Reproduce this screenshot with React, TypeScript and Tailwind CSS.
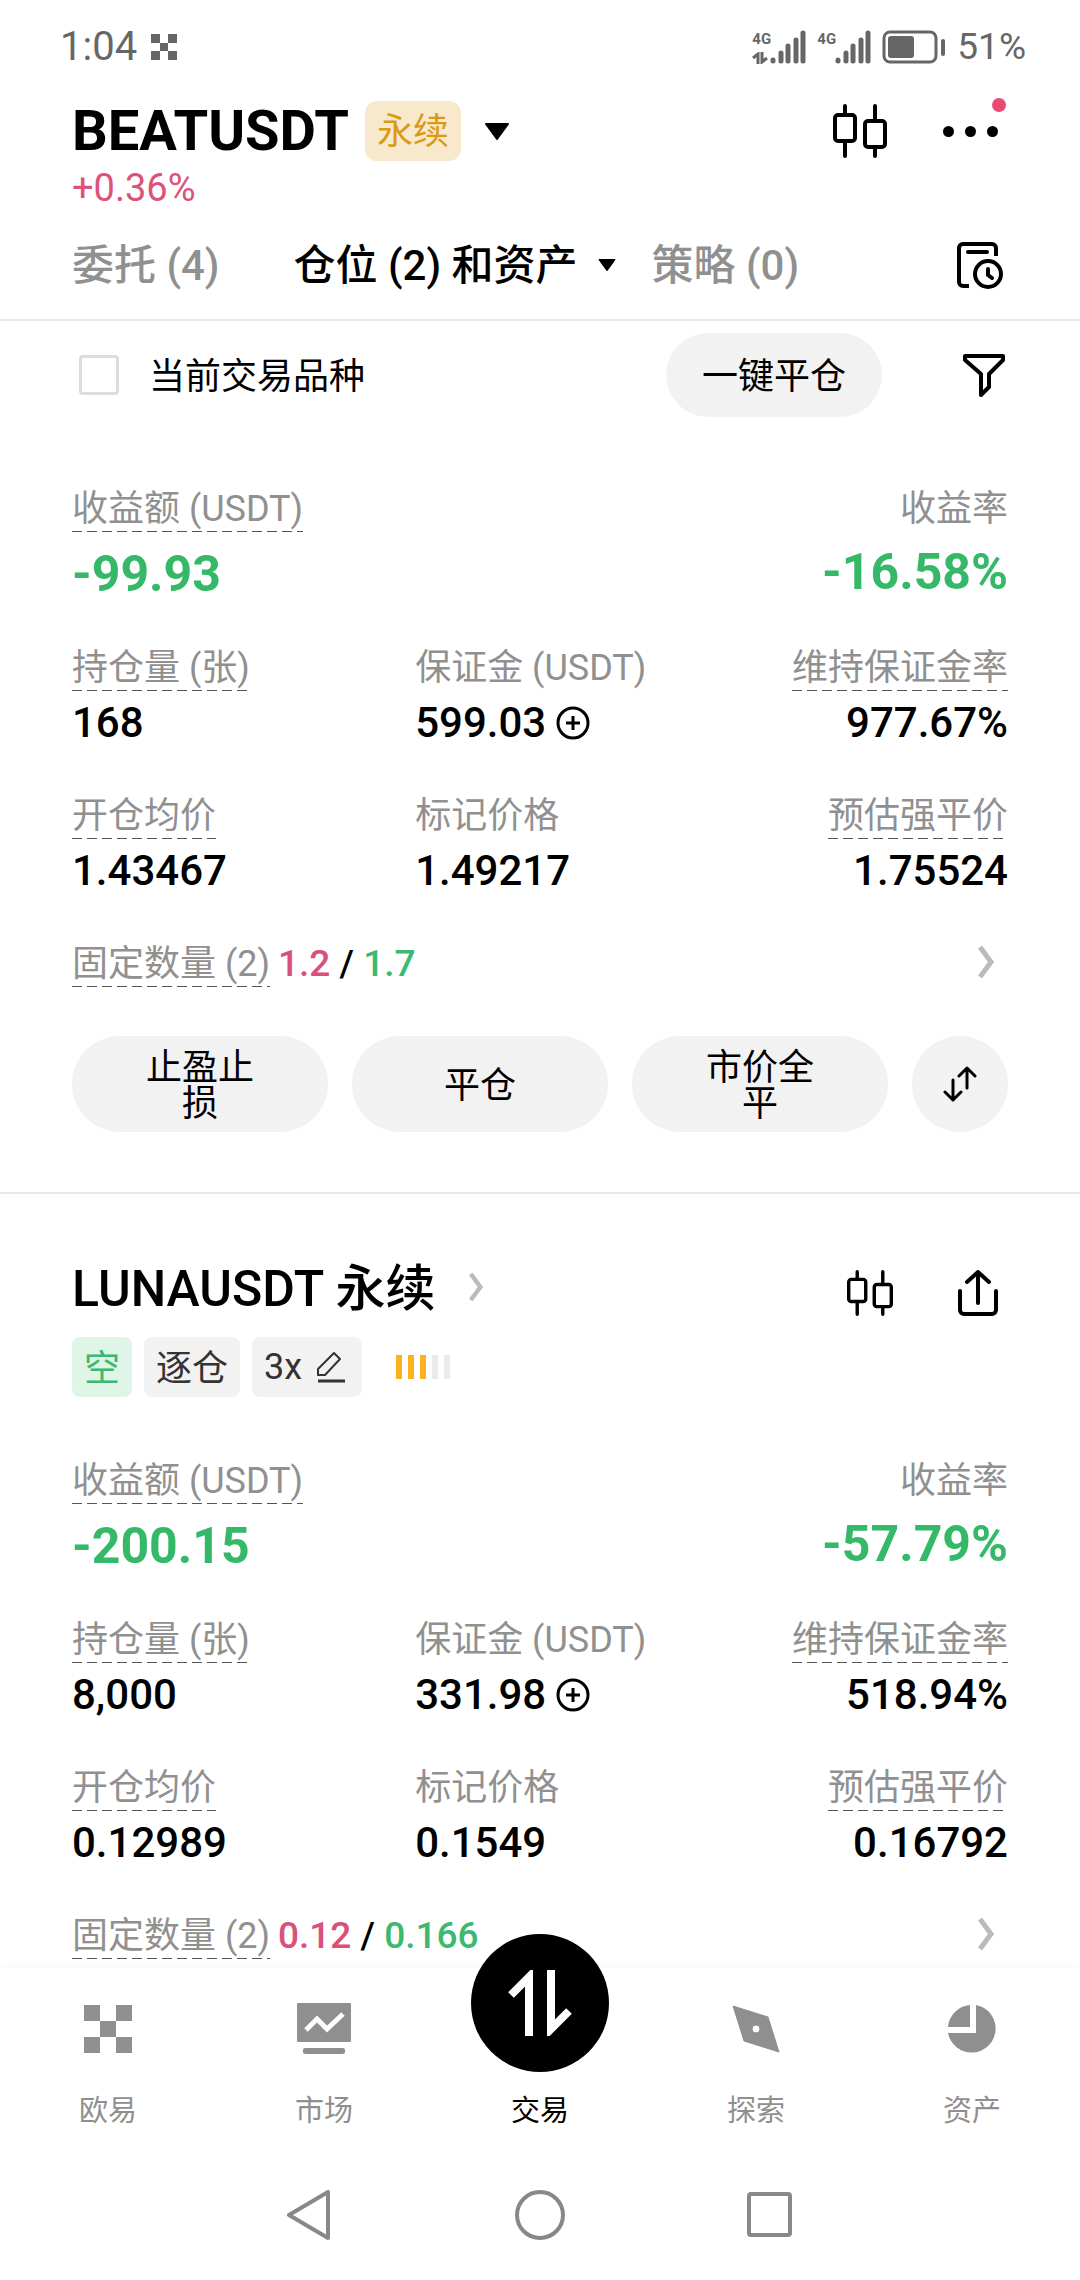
import { useState } from "react";
import type { ReactNode } from "react";
import clsx from "clsx";

type Position = {
  pnl: string;
  pnlRate: string;
  size: string;
  margin: string;
  marginRate: string;
  entryPrice: string;
  markPrice: string;
  liqPrice: string;
  takeProfit: string;
  stopLoss: string;
};

const beat: Position = {
  pnl: "-99.93",
  pnlRate: "-16.58%",
  size: "168",
  margin: "599.03",
  marginRate: "977.67%",
  entryPrice: "1.43467",
  markPrice: "1.49217",
  liqPrice: "1.75524",
  takeProfit: "1.2",
  stopLoss: "1.7",
};

const luna: Position = {
  pnl: "-200.15",
  pnlRate: "-57.79%",
  size: "8,000",
  margin: "331.98",
  marginRate: "518.94%",
  entryPrice: "0.12989",
  markPrice: "0.1549",
  liqPrice: "0.16792",
  takeProfit: "0.12",
  stopLoss: "0.166",
};

/* Icons */
const LogoIcon = ({ className }: { className: string }) => (
  <svg viewBox="0 0 48 48" className={className} fill="currentColor" shapeRendering="crispEdges" aria-hidden="true">
    <path d="M0 0h16v16H0zM32 0h16v16H32zM16 16h16v16H16zM0 32h16v16H0zM32 32h16v16H32z" />
  </svg>
);

const CandleIcon = ({ className }: { className: string }) => (
  <svg viewBox="0 0 54 54" className={className} fill="none" stroke="currentColor" strokeWidth="4" strokeLinecap="round" aria-hidden="true">
    <rect x="2" y="11" width="20" height="26" rx="3" />
    <rect x="32" y="17" width="20" height="26" rx="3" />
    <path d="M12 2v9M12 37v15M42 2v15M42 43v9" />
  </svg>
);

const CaretIcon = ({ className }: { className: string }) => (
  <svg viewBox="0 0 24 17" className={className} fill="currentColor" stroke="currentColor" strokeWidth="2" strokeLinejoin="round" aria-hidden="true">
    <path d="M1 1h22L12 16z" />
  </svg>
);

const HistoryIcon = () => (
  <svg viewBox="0 0 48 48" className="size-12" fill="none" stroke="currentColor" strokeWidth="4" aria-hidden="true">
    <path d="M40 15V7a4 4 0 0 0-4-4H7a4 4 0 0 0-4 4v34a4 4 0 0 0 4 4h6" />
    <path d="M12 11h19" strokeLinecap="round" />
    <circle cx="32" cy="33" r="13" />
    <path d="M32 28v6l4 3" strokeLinecap="round" />
  </svg>
);

const FilterIcon = () => (
  <svg viewBox="0 0 44 44" className="size-11" fill="none" stroke="currentColor" strokeWidth="4" strokeLinejoin="round" aria-hidden="true">
    <path d="M3 3h38v4L27 21v13l-8 8V21L3 7z" />
  </svg>
);

const ChevronIcon = ({ className }: { className: string }) => (
  <svg viewBox="0 0 16 32" className={className} fill="none" stroke="#bbbbbb" strokeWidth="5" aria-hidden="true">
    <path d="M2 1l11 15L2 31" />
  </svg>
);

const PlusCircleIcon = () => (
  <svg viewBox="0 0 34 34" className="size-[34px]" fill="none" stroke="currentColor" strokeWidth="3" aria-hidden="true">
    <circle cx="17" cy="17" r="15" />
    <path d="M17 10v14M10 17h14" />
  </svg>
);

const ShareIcon = () => (
  <svg viewBox="0 0 46 48" className="h-12 w-[46px]" fill="none" stroke="currentColor" strokeWidth="4" strokeLinecap="round" strokeLinejoin="round" aria-hidden="true">
    <path d="M5 22v19a4 4 0 0 0 4 4h28a4 4 0 0 0 4-4V22" />
    <path d="M23 34V3M12 13L23 3l11 10" />
  </svg>
);

const SwapIcon = () => (
  <svg viewBox="0 0 36 36" className="size-9" fill="none" stroke="currentColor" strokeWidth="3" strokeLinecap="round" strokeLinejoin="round" aria-hidden="true">
    <path d="M11 14v20M3 26l8 8 8-8M25 22V2M17 10l8-8 8 8" />
  </svg>
);

const PencilIcon = () => (
  <svg viewBox="0 0 30 32" className="h-8 w-[30px]" fill="none" stroke="currentColor" strokeWidth="2" strokeLinejoin="round" aria-hidden="true">
    <path d="M18 2l6 6L9 24H2v-6z" />
    <path d="M2 30h27" strokeWidth="3" />
  </svg>
);

const MarketIcon = () => (
  <svg viewBox="0 0 54 52" className="h-[52px] w-[54px]" aria-hidden="true">
    <rect width="54" height="39" rx="1" fill="currentColor" />
    <rect x="6" y="45" width="42" height="6" rx="2" fill="currentColor" />
    <path d="M9 27l11-11 10 10 16-15" fill="none" stroke="#ffffff" strokeWidth="5" />
  </svg>
);

const TradeIcon = () => (
  <svg viewBox="0 0 64 66" className="h-[66px] w-16" fill="none" stroke="#ffffff" strokeWidth="8" aria-hidden="true">
    <path d="M3 25L21 7v59" />
    <path d="M43 0v59l18-18" />
  </svg>
);

const ExploreIcon = () => (
  <svg viewBox="0 0 48 48" className="size-12" aria-hidden="true">
    <path
      d="M1 1l35 11 11 35-35-11zM24 20a4 4 0 1 0 0 8a4 4 0 1 0 0-8z"
      fill="currentColor"
      fillRule="evenodd"
      stroke="currentColor"
      strokeWidth="1"
      strokeLinejoin="round"
    />
  </svg>
);

const AssetsIcon = () => (
  <svg viewBox="0 0 48 48" className="size-12" fill="currentColor" aria-hidden="true">
    <path d="M22 0v22H0A24 24 0 0 1 22 0z" />
    <path d="M28 0a24 24 0 1 1-28 28h28z" />
  </svg>
);

const Signal = ({ active }: { active?: boolean }) => (
  <div className="flex items-start">
    <div className="flex w-[18px] flex-col items-start">
      <span className="text-[15px] leading-[18px] font-bold">4G</span>
      {active && (
        <svg viewBox="0 0 16 12" className="mt-1 h-3 w-4" fill="none" stroke="currentColor" strokeWidth="3" aria-hidden="true">
          <path d="M1 6l5-4v10M10 0v10l5-4" />
        </svg>
      )}
    </div>
    <svg viewBox="0 0 36 34" className="h-[34px] w-9" fill="none" stroke="currentColor" strokeWidth="5" strokeLinecap="round" aria-hidden="true">
      <path d="M3 30v1M11 23v8M18 16v15M26 10v21M33 3v28" />
    </svg>
  </div>
);

const StatusBar = () => (
  <div className="flex h-[60px] items-center justify-between pr-[54px] pl-[60px] text-[40px] text-[#666666]">
    <div className="flex items-center gap-[14px]">
      <span>1:04</span>
      <LogoIcon className="size-[26px]" />
    </div>
    <div className="flex items-center gap-[11px]">
      <Signal active />
      <Signal />
      <svg viewBox="0 0 64 34" className="h-[34px] w-16" aria-hidden="true">
        <rect x="2" y="2" width="52" height="30" rx="6" fill="none" stroke="currentColor" strokeWidth="3" />
        <rect x="6" y="6" width="26" height="22" rx="3" fill="currentColor" />
        <rect x="59" y="9" width="4" height="17" rx="2" fill="currentColor" />
      </svg>
      <span className="text-[37px]">51%</span>
    </div>
  </div>
);

const Header = () => (
  <header>
    <div className="mt-[22px] flex h-16 items-center justify-between px-[72px]">
      <button type="button" className="flex items-center">
        <h1 className="text-[56px] leading-[64px] font-bold">BEATUSDT</h1>
        <span className="ml-4 rounded-xl bg-[#f8e9cd] px-3 pt-[2px] text-[36px] leading-[58px] text-[#d99a16]">永续</span>
        <CaretIcon className="ml-6 h-[17px] w-6" />
      </button>
      <div className="flex items-center gap-[56px]">
        <button type="button" aria-label="K线">
          <CandleIcon className="size-[54px]" />
        </button>
        <button type="button" aria-label="更多" className="relative flex h-16 items-center gap-[11px] pr-[10px]">
          <span className="size-[11px] rounded-full bg-black" />
          <span className="size-[11px] rounded-full bg-black" />
          <span className="size-[11px] rounded-full bg-black" />
          <span className="absolute -top-px right-[2px] size-[14px] rounded-full bg-[#e94b72]" />
        </button>
      </div>
    </div>
    <p className="mt-[2px] px-[72px] text-[38px] leading-[46px] text-[#dd5278]">+0.36%</p>
    <nav className="mt-[22px] flex h-16 items-center gap-9 px-[72px] text-[42px] font-medium whitespace-nowrap text-[#909090]">
      <button type="button">委托 (4)</button>
      <button type="button" className="ml-[38px] flex items-center gap-5 text-black">
        仓位 (2) 和资产
        <CaretIcon className="h-3 w-[18px]" />
      </button>
      <button type="button">策略 (0)</button>
      <button type="button" aria-label="历史记录" className="mr-1 ml-auto text-black">
        <HistoryIcon />
      </button>
    </nav>
  </header>
);

const FilterRow = () => {
  const [onlyCurrent, setOnlyCurrent] = useState(false);

  return (
    <div className="mt-[22px] flex items-center border-t-2 border-[#ebebeb] px-[72px] pt-3">
      <label className="flex items-center gap-[30px] text-[36px]">
        <input
          type="checkbox"
          checked={onlyCurrent}
          onChange={(e) => setOnlyCurrent(e.target.checked)}
          className="ml-[7px] size-10 appearance-none rounded-sm border-3 border-[#dddddd] checked:bg-black"
        />
        <span className="pt-1">当前交易品种</span>
      </label>
      <button type="button" className="mr-20 ml-auto h-[84px] rounded-full bg-[#f2f2f2] px-9 pt-1 text-[36px]">
        一键平仓
      </button>
      <button type="button" aria-label="筛选" className="mr-[2px]">
        <FilterIcon />
      </button>
    </div>
  );
};

const Label = ({ children, dashed }: { children: ReactNode; dashed?: boolean }) => (
  <dt
    className={clsx(
      "text-[36px] leading-[46px] whitespace-nowrap text-[#909090]",
      dashed &&
        "bg-[repeating-linear-gradient(to_right,#555555_0_10px,transparent_10px_15px)] bg-[length:100%_1px] bg-bottom bg-no-repeat",
    )}
  >
    {children}
  </dt>
);

const Metric = ({ label, value, dashed, end, action }: { label: string; value: string; dashed?: boolean; end?: boolean; action?: ReactNode }) => (
  <div className={clsx("flex flex-col", end ? "items-end" : "items-start")}>
    <Label dashed={dashed}>{label}</Label>
    <dd className="mt-[2px] flex items-center gap-[10px] text-[42px] leading-[60px] font-medium">
      {value}
      {action}
    </dd>
  </div>
);

const PositionStats = ({ position }: { position: Position }) => (
  <>
    <dl className="flex items-start justify-between">
      <div>
        <Label dashed>收益额 (USDT)</Label>
        <dd className="mt-3 text-[50px] leading-[60px] font-bold text-[#35b968]">{position.pnl}</dd>
      </div>
      <div className="text-right">
        <Label>收益率</Label>
        <dd className="mt-[10px] text-[50px] leading-[60px] font-bold text-[#35b968]">{position.pnlRate}</dd>
      </div>
    </dl>
    <dl className="mt-[41px] grid grid-cols-[11fr_8fr_11fr] gap-y-10">
      <Metric label="持仓量 (张)" value={position.size} dashed />
      <Metric
        label="保证金 (USDT)"
        value={position.margin}
        action={
          <button type="button" aria-label="追加保证金">
            <PlusCircleIcon />
          </button>
        }
      />
      <Metric label="维持保证金率" value={position.marginRate} dashed end />
      <Metric label="开仓均价" value={position.entryPrice} dashed />
      <Metric label="标记价格" value={position.markPrice} />
      <Metric label="预估强平价" value={position.liqPrice} dashed end />
    </dl>
    <dl className="mt-10 flex items-start">
      <Label dashed>固定数量 (2)</Label>
      <dd className="ml-2 text-[37px] leading-[46px] font-medium">
        <span className="text-[#d9507a]">{position.takeProfit}</span> /{" "}
        <span className="text-[#3cb870]">{position.stopLoss}</span>
      </dd>
      <dd className="mt-[5px] mr-[14px] ml-auto">
        <button type="button" aria-label="查看详情" className="block">
          <ChevronIcon className="h-8 w-4" />
        </button>
      </dd>
    </dl>
  </>
);

const PositionActions = () => (
  <div className="mt-[49px] flex gap-6 text-[36px] leading-9">
    <button type="button" className="h-24 flex-1 rounded-full bg-[#f2f2f2] px-16 pt-1">
      止盈止损
    </button>
    <button type="button" className="h-24 flex-1 rounded-full bg-[#f2f2f2] px-16 pt-1">
      平仓
    </button>
    <button type="button" className="h-24 flex-1 rounded-full bg-[#f2f2f2] px-16 pt-1">
      市价全平
    </button>
    <button type="button" aria-label="反手" className="flex size-24 items-center justify-center rounded-full bg-[#f2f2f2]">
      <SwapIcon />
    </button>
  </div>
);

const LunaHeader = () => (
  <div className="mb-[61px]">
    <div className="flex items-center justify-between">
      <a href="#luna" className="flex items-center gap-8">
        <h2 className="pt-1 text-[50px] leading-[60px] font-medium">LUNAUSDT 永续</h2>
        <ChevronIcon className="h-7 w-4" />
      </a>
      <div className="mt-3 mr-[7px] flex items-center gap-[62px]">
        <button type="button" aria-label="K线">
          <CandleIcon className="size-[46px]" />
        </button>
        <button type="button" aria-label="分享">
          <ShareIcon />
        </button>
      </div>
    </div>
    <div className="mt-[18px] flex items-center gap-3 text-[36px] leading-[56px] text-[#333333]">
      <span className="rounded-lg bg-[#dff5e7] px-3 pt-1 text-[#3cb870]">空</span>
      <span className="rounded-lg bg-[#f2f2f2] px-3 pt-1">逐仓</span>
      <button type="button" className="flex h-[60px] items-center gap-[14px] rounded-lg bg-[#f2f2f2] pr-4 pl-3">
        3x
        <PencilIcon />
      </button>
      {/* Risk level */}
      <div className="ml-[22px] flex gap-[6px]">
        <span className="h-6 w-[6px] bg-[#fbb21d]" />
        <span className="h-6 w-[6px] bg-[#fbb21d]" />
        <span className="h-6 w-[6px] bg-[#fbb21d]" />
        <span className="h-6 w-[6px] bg-[#ebebeb]" />
        <span className="h-6 w-[6px] bg-[#ebebeb]" />
      </div>
    </div>
  </div>
);

const TabLink = ({ label, href, icon }: { label: string; href: string; icon: ReactNode }) => (
  <a href={href} className="flex flex-1 flex-col items-center pt-[34px]">
    <span className="flex h-[54px] items-center">{icon}</span>
    <span className="mt-[35px] text-[29px] leading-10">{label}</span>
  </a>
);

const BottomNav = () => (
  <nav className="flex bg-white text-[#8f8f8f] shadow-[0_-4px_6px_rgba(0,0,0,0.025)]">
    <TabLink label="欧易" href="#home" icon={<LogoIcon className="size-12" />} />
    <TabLink label="市场" href="#market" icon={<MarketIcon />} />
    <a href="#trade" className="-mt-[34px] flex flex-1 flex-col items-center text-black">
      <span className="flex size-[138px] items-center justify-center rounded-full bg-black">
        <TradeIcon />
      </span>
      <span className="mt-[19px] text-[29px] leading-10">交易</span>
    </a>
    <TabLink label="探索" href="#explore" icon={<ExploreIcon />} />
    <TabLink label="资产" href="#assets" icon={<AssetsIcon />} />
  </nav>
);

const SystemNav = () => (
  <div className="flex justify-center gap-[180px] pt-[59px] pb-10 text-[#888888]">
    <button type="button" aria-label="返回">
      <svg viewBox="0 0 50 50" className="size-[50px]" fill="none" stroke="currentColor" strokeWidth="4" strokeLinejoin="round">
        <path d="M43 2v46L4 25z" />
      </svg>
    </button>
    <button type="button" aria-label="主屏幕">
      <svg viewBox="0 0 50 50" className="size-[50px]" fill="none" stroke="currentColor" strokeWidth="4">
        <circle cx="25" cy="25" r="23" />
      </svg>
    </button>
    <button type="button" aria-label="最近任务">
      <svg viewBox="0 0 50 50" className="size-[50px]" fill="none" stroke="currentColor" strokeWidth="4">
        <rect x="4" y="4" width="41" height="41" rx="2" />
      </svg>
    </button>
  </div>
);

const App = () => {
  return (
    <div className="bg-white pt-[17px] font-['Roboto','Noto_Sans_CJK_SC',sans-serif] text-black">
      <StatusBar />
      <Header />
      <main>
        <FilterRow />
        <section className="border-b-2 border-[#e8e8e8] px-[72px] pt-[69px] pb-[60px]">
          <PositionStats position={beat} />
          <PositionActions />
        </section>
        <section className="px-[72px] pt-[61px] pb-[9px]">
          <LunaHeader />
          <PositionStats position={luna} />
        </section>
      </main>
      <BottomNav />
      <SystemNav />
    </div>
  );
};

export default App;
